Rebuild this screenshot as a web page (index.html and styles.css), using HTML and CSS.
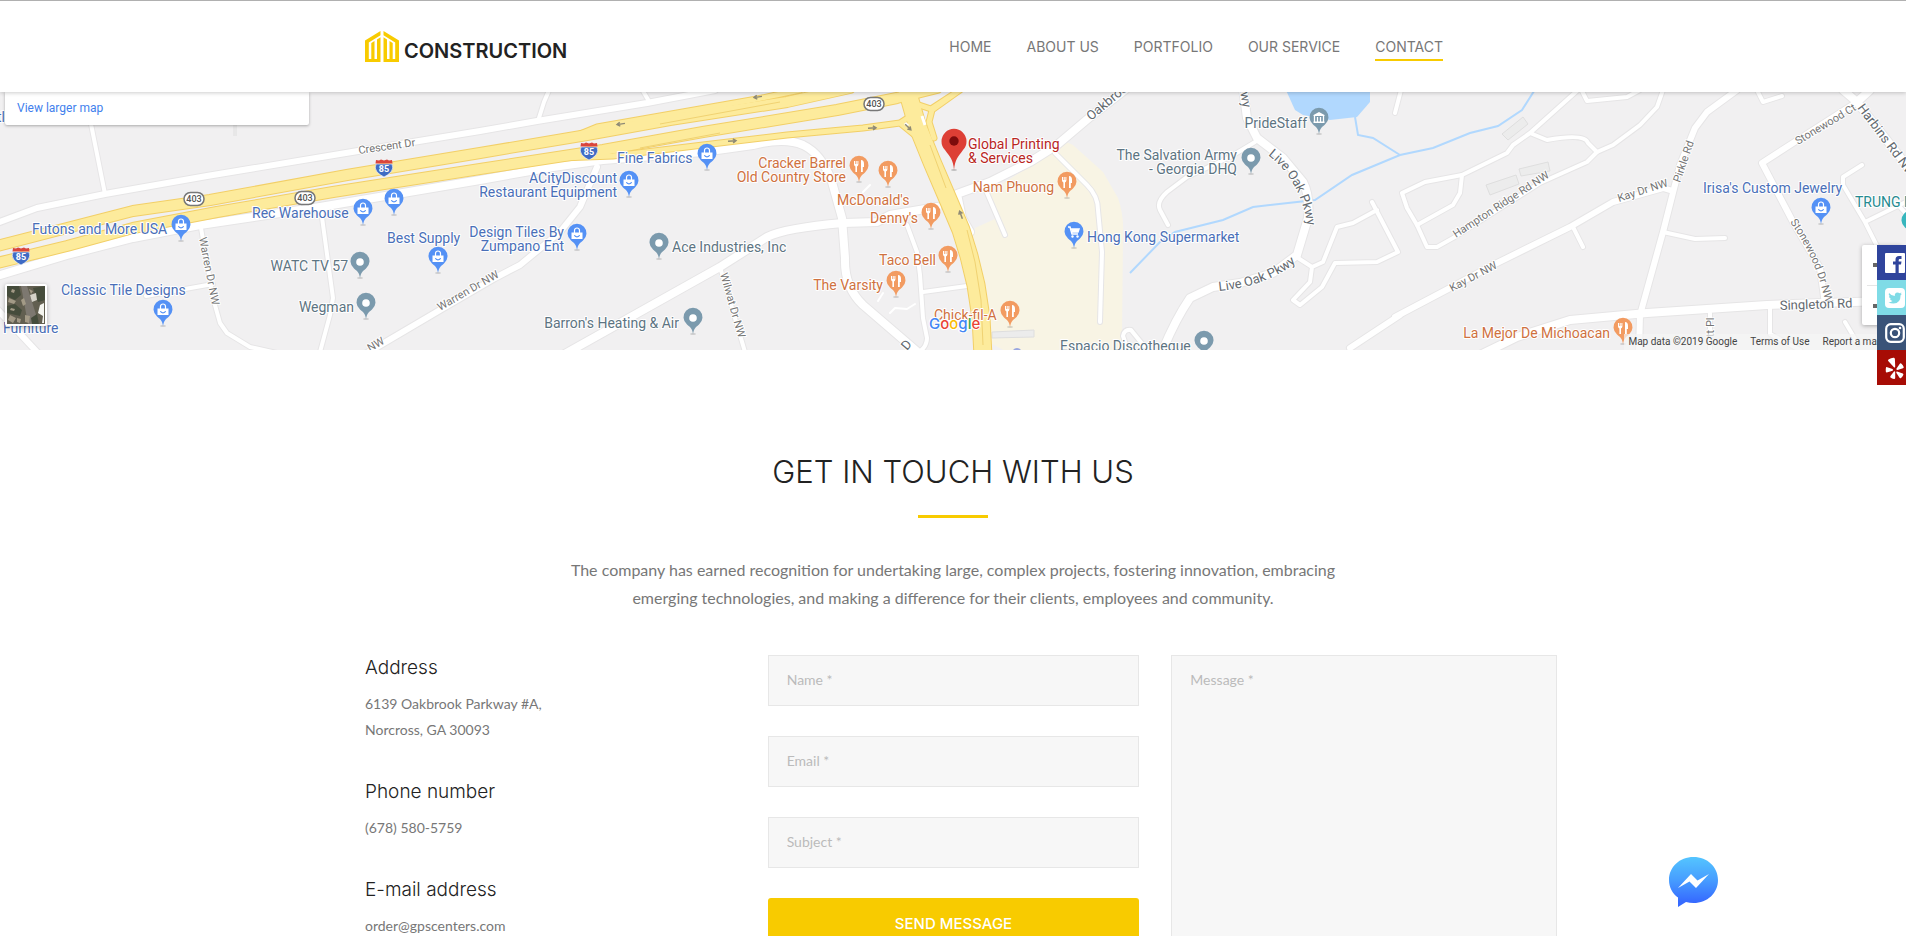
FILE: index.html
```html
<!DOCTYPE html>
<html lang="en">
	<head>
		<meta charset="UTF-8">
		<meta name="viewport" content="width=device-width, initial-scale=1">
		<title>Construction - Contact</title>
		<link rel="stylesheet" href="styles.css">
	</head>
	<body>
		<header class="header">
			<div class="container header-inner">
				<a class="logo" href="#">
					<svg width="34" height="31" viewBox="0 0 34 31" aria-hidden="true">
						<g id="logo-half" fill="#f8cb00">
							<path d="M0 9.500 15.500 0V4.300L3.800 11.500V28H6.300V12L9.500 10V28H12V8.500L15.500 6.300V31H0Z"/>
						</g>
						<use href="#logo-half" transform="translate(34 0) scale(-1 1)"/>
					</svg>
					<span>CONSTRUCTION</span>
				</a>
				<nav class="nav">
					<a href="#">HOME</a>
					<a href="#">ABOUT US</a>
					<a href="#">PORTFOLIO</a>
					<a href="#">OUR SERVICE</a>
					<a href="#" class="active">CONTACT</a>
				</nav>
			</div>
		</header>

		<section class="map">
			<svg class="map-canvas" viewBox="0 92 1906 258" preserveAspectRatio="xMidYMid slice" role="img" aria-label="Map">
				<defs>
					<g id="pin">
						<ellipse cx="0" cy="16" rx="3" ry="1" fill="#000" opacity=".15"/>
						<path d="M0 16C-1 10-3 9-6 6.500A9.500 9.500 0 1 1 6 6.500C3 9 1 10 0 16Z"/>
					</g>
					<g id="shop">
						<use href="#pin" fill="#5491f5"/>
						<path d="M-5.500-1.500H5.500V5H-5.500Z" fill="#fff"/>
						<path d="M-2.500-1V-3.500A2.500 2.500 0 0 1 2.500-3.500V-1" fill="none" stroke="#fff" stroke-width="1.200"/>
						<path d="M-2.500 1C-2 3.500 2 3.500 2.500 1" fill="none" stroke="#5491f5" stroke-width="1.200"/>
					</g>
					<g id="food">
						<use href="#pin" fill="#f29b61"/>
						<path d="M-5-5H-4V-2H-3.300V-5H-2.300V-2H-1.600V-5H-.6V-1.500Q-.8 0-2 .5V6H-3.600V.5Q-4.800 0-5-1.500ZM2-6Q5-6 5-2V1H3.800V6H2Z" fill="#fff"/>
					</g>
					<g id="dot">
						<use href="#pin" fill="#7b9aad"/>
						<circle r="3.800" fill="#fff"/>
					</g>
					<g id="interstate">
						<path d="M-8-4Q-10 0-7 4Q-4 7 0 9Q4 7 7 4Q10 0 8-4Z" fill="#3f6bc4" stroke="#fff" stroke-width=".6"/>
						<path d="M-8-8L-5-7.500-3-8.500 0-7.500 3-8.500 5-7.500 8-8 8.500-4.500H-8.500Z" fill="#d9453c"/>
						<text class="shield-text" y="4">85</text>
					</g>
					<g id="route">
						<rect x="-10" y="-6.500" width="20" height="13" rx="6.500" fill="#fff" stroke="#777" stroke-width="1.500"/>
						<text class="route-text" y="3">403</text>
					</g>
					<g id="arrow">
						<path d="M-4 0H4M1-2 4 0 1 2" fill="none" stroke="#8f8a76" stroke-width="1.500"/>
					</g>

					<!-- streets, grouped by width -->
					<g id="lanes">
						<path d="M91 124 105 194M550 88 544 102 538 121M643 91 650 103"/>
						<path d="M201 228 213 298 220 323 227 333 250 347 277 353M146 296 213 284M321 210 333 298 330 315 320 352"/>
						<path d="M720 267 745 352M907 225 917 252 920 275 923 318 927 338Q927 348 916 354M923 292 967 286"/>
						<path d="M1055 153 1087 185Q1098 196 1098 210L1102 252 1100 322M987 193 1005 235M1255 142 1230 157 1187 177 1167 192Q1156 202 1160 210L1168 225"/>
						<path d="M1129 353 1123 336Q1124 329 1131 330L1144 346M1395 113 1401 90M1298 258 1312 267 1310 282 1293 300 1300 305 1322 287 1335 263 1377 262 1398 252 1372 202M1312 267 1323 262 1337 227 1353 223 1377 210"/>
						<path d="M1462 175 1425 182 1402 193 1407 208 1417 225 1427 247H1437L1453 238 1540 183 1587 162 1597 152 1613 145 1640 125 1657 107 1663 90"/>
						<path d="M1417 225 1453 205 1460 193 1462 175 1507 153 1513 145 1530 133 1578 90M1530 133 1547 140Q1585 133 1588 143L1597 152M1582 91 1587 101 1627 97 1640 90"/>
						<path d="M1663 232 1695 239 1725 238M1573 227 1583 247M1862 165 1843 177V185L1865 222 1884 260M1865 222 1910 200M1757 90 1763 102 1782 96M1710 313V352M1770 308V334L1800 350M1845 322 1858 344M1898 205 1910 218"/>
					</g>
					<g id="streets">
						<path d="M-3 223 37 208 105 194 207 176 358 151 480 131 537 121 647 103 715 90"/>
						<path d="M367 353 440 310 495 278 520 265 560 232 580 207 597 167M-3 309 37 352"/>
						<path d="M1737 90 1707 112 1695 128 1680 165 1663 232 1640 315 1639 352M1395 317 1450 288 1493 265 1570 227 1613 202 1663 188 1673 191M1350 348 1400 315"/>
						<path d="M1857 102 1793 143 1762 163 1793 222 1820 268 1825 304"/>
					</g>
					<g id="avenues">
						<path d="M-3 276 67 255 133 238 200 225 320 207 480 180 553 167 603 160 703 152 753 145Q785 137 803 145 822 154 832 182L842 218 845 258Q844 287 863 305L920 354"/>
						<path d="M563 355 670 295 720 267 767 237Q785 228 843 223L877 222 890 215 937 207"/>
						<path d="M1135 82 1090 117 1057 145 1030 162 990 182 957 194 962 218 970 232"/>
						<path d="M1243 88 1247 118 1257 138 1283 158 1303 182Q1310 195 1308 218L1297 255 1273 273 1240 283 1213 287 1190 298Q1175 320 1162 352"/>
						<path d="M1480 355 1517 337 1570 320 1647 313 1767 305 1910 300M1843 90 1857 102 1893 148 1910 170M1857 102 1870 90"/>
					</g>
					<g id="ramps">
						<path d="M580 134 597 127 757 99 800 90M560 158 613 156 703 145 787 135 863 128 900 123 917 112M900 123 916 136M960 90 932 110 929 122 934 138M916 104 931 109 960 90"/>
					</g>
					<g id="highways">
						<path d="M-3 246 67 228 133 211 210 200 347 175 480 153 587 135 670 120 787 102 850 88"/>
						<path d="M-3 263 67 246 133 228 217 212 333 192 480 169 603 150 703 132 837 110 897 98 937 88"/>
					</g>
					<path id="boulevard" d="M906 86 917 125 932 162 950 204 961 230 969 256 976 285 981 318 983 356"/>

					<path id="live-oak-a" d="M1268 155Q1300 180 1307 224"/>
					<path id="live-oak-b" d="M1219 291Q1270 286 1300 259"/>
					<path id="stonewood-dr" d="M1790 222Q1818 262 1826 306"/>
				</defs>

				<rect y="80" width="1906" height="280" fill="#f1f0f1"/>
				<!-- commercial area, water and buildings -->
				<path d="M1062 140 1073 145 1103 172 1118 198Q1124 215 1123 235L1122 338 1117 352H1007L985 340 979 300 967 252 975 228 997 218 987 194 1030 166Z" fill="#f8f4e4"/>
				<path d="M1285 88 1295 110 1303 115 1330 120 1357 117 1370 102V88Z" fill="#b1d8fe"/>
				<path d="M1130 273 1160 242 1175 232 1223 220 1253 207 1315 200 1352 175 1400 155 1433 148 1470 133 1498 126 1522 110 1536 88M1400 155 1373 138 1358 135 1355 117" fill="none" stroke="#b1d8fe" stroke-width="2"/>
				<path d="M1502 134 1523 117 1528 124 1508 140ZM1486 185 1516 175 1519 184 1490 195ZM1519 169 1548 162 1550 171 1521 176ZM992 332 1034 330V337L992 338Z" class="building"/>
				<path d="M234 125V136M236 125V136" class="building"/>

				<g class="casing">
					<use href="#lanes" stroke-width="6"/>
					<use href="#streets" stroke-width="8"/>
					<use href="#avenues" stroke-width="10"/>
				</g>
				<g class="road">
					<use href="#lanes" stroke-width="4"/>
					<use href="#streets" stroke-width="6"/>
					<use href="#avenues" stroke-width="8"/>
					<path d="M890 313 895 308 907 309 915 304M878 301 883 293M863 192 870 185" stroke-width="2"/>
				</g>
				<g class="highway-casing">
					<use href="#ramps" stroke-width="7"/>
					<use href="#highways" stroke-width="12"/>
					<use href="#boulevard" stroke-width="19"/>
				</g>
				<g class="highway">
					<use href="#ramps" stroke-width="5"/>
					<use href="#highways" stroke-width="10"/>
					<use href="#boulevard" stroke-width="17"/>
				</g>
				<path d="M930 145 946 188M967 230 975 262 981 300 983 345M660 124 780 102M640 148 720 133" fill="none" stroke="#f0d272" stroke-width="1"/>
				<path d="M922 116 925 125M905 123 908 126" stroke="#fff" stroke-width="3" fill="none"/>
				<use href="#arrow" transform="translate(621 124) rotate(171)"/>
				<use href="#arrow" transform="translate(758 97) rotate(171)"/>
				<use href="#arrow" transform="translate(732 141) rotate(-5)"/>
				<use href="#arrow" transform="translate(872 128) rotate(-3)"/>
				<use href="#arrow" transform="translate(908 127) rotate(45)"/>
				<use href="#arrow" transform="translate(961 215) rotate(-110)"/>

				<use href="#interstate" x="384" y="168"/>
				<use href="#interstate" x="21" y="256"/>
				<use href="#interstate" x="589" y="151"/>
				<use href="#route" x="194" y="199"/>
				<use href="#route" x="305" y="198"/>
				<use href="#route" x="874" y="104"/>

				<g class="street-name">
					<text transform="translate(359 154) rotate(-8)">Crescent Dr</text>
					<text transform="translate(199 238) rotate(79)">Warren Dr NW</text>
					<text transform="translate(440 311) rotate(-30)">Warren Dr NW</text>
					<text transform="translate(370 352) rotate(-30)">NW</text>
					<text transform="translate(720 274) rotate(74)">Wilwat Dr NW</text>
					<text transform="translate(1456 238) rotate(-33)">Hampton Ridge Rd NW</text>
					<text transform="translate(1452 292) rotate(-28)">Kay Dr NW</text>
					<text transform="translate(1619 202) rotate(-18)">Kay Dr NW</text>
					<text transform="translate(1680 183) rotate(-71)">Pirkle Rd</text>
					<text transform="translate(1798 145) rotate(-31)">Stonewood Ct</text>
					<text transform="translate(1714 337) rotate(-90)">tt Pl</text>
					<text><textPath href="#stonewood-dr">Stonewood Dr NW</textPath></text>
				</g>
				<g class="street-name main">
					<text transform="translate(1091 121) rotate(-40)">Oakbrook</text>
					<text transform="translate(1239 86) rotate(80)">kwy</text>
					<text><textPath href="#live-oak-a">Live Oak Pkwy</textPath></text>
					<text><textPath href="#live-oak-b">Live Oak Pkwy</textPath></text>
					<text transform="translate(1857 108) rotate(53)">Harbins Rd NW</text>
					<text transform="translate(1780 310) rotate(-2)">Singleton Rd</text>
					<text transform="translate(907 351) rotate(-50)">D</text>
				</g>

				<g class="place shop">
					<text x="-3" y="122">tl</text>
					<text x="32" y="234">Futons and More USA</text>
					<text x="252" y="218">Rec Warehouse</text>
					<text x="387" y="243">Best Supply</text>
					<text x="61" y="295">Classic Tile Designs</text>
					<text x="3" y="333">Furniture</text>
					<text x="617" y="163">Fine Fabrics</text>
					<text x="617" y="183" class="end">ACityDiscount</text>
					<text x="617" y="197" class="end">Restaurant Equipment</text>
					<text x="564" y="237" class="end">Design Tiles By</text>
					<text x="564" y="251" class="end">Zumpano Ent</text>
					<text x="1087" y="242">Hong Kong Supermarket</text>
					<text x="1703" y="193">Irisa's Custom Jewelry</text>
				</g>
				<g class="place other">
					<text x="348" y="271" class="end">WATC TV 57</text>
					<text x="354" y="312" class="end">Wegman</text>
					<text x="672" y="252">Ace Industries, Inc</text>
					<text x="679" y="328" class="end">Barron's Heating &amp; Air</text>
					<text x="1237" y="160" class="end">The Salvation Army</text>
					<text x="1237" y="174" class="end">- Georgia DHQ</text>
					<text x="1307" y="128" class="end">PrideStaff</text>
					<text x="1060" y="351">Espacio Discotheque</text>
				</g>
				<g class="place food">
					<text x="846" y="168" class="end">Cracker Barrel</text>
					<text x="846" y="182" class="end">Old Country Store</text>
					<text x="837" y="205">McDonald's</text>
					<text x="918" y="223" class="end">Denny's</text>
					<text x="936" y="265" class="end">Taco Bell</text>
					<text x="883" y="290" class="end">The Varsity</text>
					<text x="934" y="320">Chick-fil-A</text>
					<text x="1054" y="192" class="end">Nam Phuong</text>
					<text x="1610" y="338" class="end">La Mejor De Michoacan</text>
				</g>
				<g class="place target">
					<text x="968" y="149">Global Printing</text>
					<text x="968" y="163">&amp; Services</text>
				</g>
				<text class="place fun" x="1855" y="207">TRUNG NGUYEN</text>

				<use href="#shop" x="181" y="225"/>
				<use href="#shop" x="363" y="209"/>
				<use href="#shop" x="394" y="199"/>
				<use href="#shop" x="438" y="257"/>
				<use href="#shop" x="163" y="310"/>
				<use href="#shop" x="707" y="154"/>
				<use href="#shop" x="629" y="181"/>
				<use href="#shop" x="577" y="234"/>
				<use href="#shop" x="1821" y="208"/>
				<use href="#dot" x="360" y="262"/>
				<use href="#dot" x="366" y="303"/>
				<use href="#dot" x="659" y="243"/>
				<use href="#dot" x="693" y="318"/>
				<use href="#dot" x="1251" y="158"/>
				<use href="#dot" x="1204" y="341"/>
				<use href="#food" x="859" y="166"/>
				<use href="#food" x="888" y="171"/>
				<use href="#food" x="931" y="213"/>
				<use href="#food" x="948" y="256"/>
				<use href="#food" x="896" y="281"/>
				<use href="#food" x="1067" y="182"/>
				<use href="#food" x="1010" y="311"/>
				<use href="#food" x="1623" y="328"/>
				<use href="#pin" x="1911" y="221" fill="#37b6bd"/>
				<g transform="translate(1074 232)">
					<use href="#pin" fill="#5491f5"/>
					<path d="M-6-5H-4L-2 2H4M-3-3H5L4 0H-2" fill="none" stroke="#fff" stroke-width="1.500"/>
					<path d="M-3-3H5L4 0H-2Z" fill="#fff"/>
					<circle cx="-1.500" cy="4.500" r="1.200" fill="#fff"/>
					<circle cx="3.500" cy="4.500" r="1.200" fill="#fff"/>
				</g>
				<g transform="translate(1319 118)">
					<use href="#pin" fill="#7b9aad"/>
					<path d="M0-6 5.500-3V-2H-5.500V-3ZM-5.500 3.500H5.500V5H-5.500Z" fill="#fff"/>
					<path d="M-4.500-2V4M-1.500-1V4M1.500-1V4M4.500-2V4" stroke="#fff" stroke-width="1.300"/>
				</g>
				<g transform="translate(954 141)">
					<ellipse cy="29" rx="3" ry="1" fill="#000" opacity=".2"/>
					<path d="M0 29C-1 18-4 16-9 9A12.500 12.500 0 1 1 9 9C4 16 1 18 0 29Z" fill="#dd3f35"/>
					<circle r="4.700" fill="#7d0b0c"/>
				</g>
				<path d="M1013 350A5 5 0 0 1 1021 350Z" fill="#9aa7e0"/>
				<text class="google" x="929" y="329"><tspan fill="#4285f4">G</tspan><tspan fill="#ea4335">o</tspan><tspan fill="#fbbc05">o</tspan><tspan fill="#4285f4">g</tspan><tspan fill="#34a853">l</tspan><tspan fill="#ea4335">e</tspan></text>
			</svg>

			<div class="map-card"><a href="#">View larger map</a></div>
			<button class="map-type" type="button" aria-label="Satellite view">
				<svg viewBox="0 0 38 38" aria-hidden="true">
					<rect width="38" height="38" fill="#625f50"/>
					<path d="M14 0 21 38H32L20 0Z" fill="#7d7870"/>
					<path d="M0 0H12L14 9 8 14 0 10ZM26 2 38 0V14L31 16ZM0 20 8 18 15 24 13 30 0 27ZM24 32 30 28 32 38H25Z" fill="#454c3b"/>
					<path d="M2 12 9 15 7 18 1 16ZM3 29 9 32 6 37 1 34ZM14 14 17 12 19 18 16 20ZM22 3 26 5 24 8Z" fill="#a39a86"/>
					<path d="M23 9 29 7 30 14 25 16Z" fill="#d5d2c8"/>
					<path d="M33 19 37 17V37H35L36 30 31 27Z" fill="#f4f4ee"/>
					<path d="M18 29 23 30 22 37 18 36ZM10 32 14 33 13 37 10 36ZM5 3 8 4 7 7 4 6ZM4 22 8 23 7 25 3 24Z" fill="#a39a86"/>
				</svg>
			</button>
			<div class="map-zoom">
				<button type="button" aria-label="Zoom in"></button>
				<button type="button" aria-label="Zoom out"></button>
			</div>
			<div class="map-credits">
				<span>Map data ©2019 Google</span>
				<a href="#">Terms of Use</a>
				<a href="#">Report a map error</a>
			</div>
		</section>

		<main class="contact">
			<h1>GET IN TOUCH WITH US</h1>
			<p class="lead">The company has earned recognition for undertaking large, complex projects, fostering innovation, embracing emerging technologies, and making a difference for their clients, employees and community.</p>

			<div class="columns">
				<div class="info">
					<h2>Address</h2>
					<p>6139 Oakbrook Parkway #A,<br>Norcross, GA 30093</p>
					<h2>Phone number</h2>
					<p>(678) 580-5759</p>
					<h2>E-mail address</h2>
					<p>order@gpscenters.com</p>
				</div>
				<form class="form" action="#">
					<div class="fields">
						<input type="text" placeholder="Name *" aria-label="Name">
						<input type="email" placeholder="Email *" aria-label="Email">
						<input type="text" placeholder="Subject *" aria-label="Subject">
						<button type="submit">SEND MESSAGE</button>
					</div>
					<div class="message">
						<textarea placeholder="Message *" aria-label="Message"></textarea>
					</div>
				</form>
			</div>
		</main>

		<!-- social links -->
		<div class="social">
			<a class="facebook" href="#" aria-label="Facebook">
				<svg viewBox="0 0 20 20"><rect width="20" height="20" rx="1" fill="#fff"/><path d="M10.500 20V11.500H8V8.500H10.500V6.500Q10.500 3 14 3H16.500V6H14.800Q13.700 6 13.700 7.200V8.500H16.500L16 11.500H13.700V20Z" fill="#2f449c"/></svg>
			</a>
			<a class="twitter" href="#" aria-label="Twitter">
				<svg viewBox="0 0 20 20"><rect width="20" height="20" rx="4" fill="#fff"/><path d="M4 5Q6.500 8 9.800 8Q9.500 4.500 12.500 4.500Q13.800 4.500 14.500 5.200L16.500 4.500 15.500 6 17 5.800 15.600 7.300Q15.600 15.500 8.500 15.500 5.500 15.500 3.500 14.200 6 14.200 7.500 13 5.500 12.700 5 11L6 10.900Q4 10 4 8L5 8.300Q3 7 4 5Z" fill="#7fdbe6"/></svg>
			</a>
			<a class="instagram" href="#" aria-label="Instagram">
				<svg viewBox="0 0 20 20"><rect x="1.200" y="1.200" width="17.600" height="17.600" rx="4.500" fill="none" stroke="#fff" stroke-width="2.200"/><circle cx="10" cy="10" r="4.200" fill="none" stroke="#fff" stroke-width="2.200"/><circle cx="15" cy="5" r="1.300" fill="#fff"/></svg>
			</a>
			<a class="yelp" href="#" aria-label="Yelp">
				<svg viewBox="0 0 20 20" fill="#fff"><path d="M3.500 1.500Q6.500-.5 9-.2 9.800 0 9.900 1L10.200 8.500Q10 10.300 8.700 9L3.200 3Q2.700 2 3.500 1.500Z"/><path d="M1.500 9 7.500 11Q8.800 12 7.500 12.800L1.800 14.500Q.8 14.500.8 13.500.6 11 1 9.500 1 9 1.500 9Z"/><path d="M9 13.500Q10 13 10.200 14V20Q10 21.200 9 21 7 20.500 5.500 19.500 5 19 5.500 18Z"/><path d="M12 13.500 17.800 15.500Q18.700 16 18.300 17 17.500 19 15.800 20.200 15 20.500 14.500 19.800L11.300 14.800Q11 13.500 12 13.500Z"/><path d="M11.500 10.500 15 5.500Q15.700 5 16.500 5.700 18 7 18.700 9 18.900 10 18 10.300L12.500 12Q11 12 11.500 10.500Z"/></svg>
			</a>
		</div>

		<a class="messenger" href="#" aria-label="Messenger">
			<svg width="49" height="50" viewBox="0 0 49 50">
				<defs>
					<linearGradient id="bubble" x1="0" y1="0" x2="0" y2="1">
						<stop offset="0" stop-color="#54c5ff"/>
						<stop offset=".45" stop-color="#479eff"/>
						<stop offset=".9" stop-color="#366aff"/>
					</linearGradient>
				</defs>
				<path d="M24.500 0C38.500 0 49 10 49 23S38.500 46 24.500 46Q20.500 46 17 45L9 50V40.500C3.500 36.500 0 30.500 0 23 0 10 10.500 0 24.500 0Z" fill="url(#bubble)"/>
				<path d="M9 31 22 17 28.500 23.500 40 17 27 31 20.500 24.500Z" fill="#fff"/>
			</svg>
		</a>
	</body>
</html>
```
FILE: styles.css
```css
*{
	margin: 0;
	padding: 0;
	box-sizing: border-box;
}
body{
	font-family: Lato, "Open Sans", sans-serif;
	font-size: 14px;
	line-height: 26px;
	color: #777;
	background: #fff;
}
a{
	color: inherit;
	text-decoration: none;
}
.container, .columns{
	max-width: 1208px;
	margin: 0 auto;
}

/* header */
.header{
	position: relative;
	z-index: 2;
	border-top: 1px solid #b0b0b0;
	background: #fff;
	box-shadow: 0 1px 4px rgba(0,0,0,0.2);
}
.header-inner{
	display: flex;
	justify-content: space-between;
	align-items: center;
	height: 91px;
	padding: 0 114px 0 16px;
}
.logo{
	display: flex;
	align-items: center;
	gap: 5px;
	color: #222;
	font-family: Inter, "Open Sans", sans-serif;
	font-size: 20px;
	font-weight: 600;
}
.logo span{
	padding-top: 8px;
}
.nav{
	display: flex;
	gap: 35px;
	font-family: Inter, "Open Sans", sans-serif;
	font-size: 14px;
	font-weight: 400;
	line-height: 24px;
}
.nav a{
	border-top: 2px solid transparent;
	border-bottom: 2px solid transparent;
}
.nav .active{
	border-bottom-color: #f8cb00;
}

/* map */
.map{
	position: relative;
	overflow: hidden;
	font-family: Roboto, "Open Sans", sans-serif;
}
.map-canvas{
	display: block;
	width: 100%;
	height: 258px;
}
.casing, .road, .highway, .highway-casing{
	fill: none;
	stroke-linejoin: round;
	stroke-linecap: round;
}
.casing{
	stroke: #e6e5e6;
}
.road{
	stroke: #fff;
}
.highway{
	stroke: #fdeb9c;
}
.highway-casing{
	stroke: #f2cf67;
}
.building{
	fill: #ececec;
	stroke: #dedede;
}
.place, .street-name{
	font-size: 14px;
	paint-order: stroke;
	stroke: #fff;
	stroke-width: 2px;
	stroke-linejoin: round;
}
.street-name{
	font-size: 11px;
	fill: #757575;
}
.street-name.main{
	font-size: 13px;
	fill: #62696f;
}
.shop{
	fill: #4a6fb8;
}
.other{
	fill: #5d7482;
}
.food{
	fill: #cf7140;
}
.target{
	fill: #b9261f;
}
.fun{
	fill: #258a90;
}
.end{
	text-anchor: end;
}
.shield-text, .route-text{
	font-size: 9px;
	font-weight: 700;
	text-anchor: middle;
	fill: #fff;
}
.route-text{
	font-weight: 500;
	fill: #555;
}
.google{
	font-family: Inter, sans-serif;
	font-size: 15px;
	font-weight: 500;
	paint-order: stroke;
	stroke: #fff;
	stroke-width: 2px;
}
.map-card{
	position: absolute;
	top: 0;
	left: 5px;
	width: 304px;
	padding: 3px 12px 4px;
	border-radius: 0 0 2px 2px;
	background: #fff;
	box-shadow: 0 1px 3px rgba(0,0,0,0.3);
	font-size: 12px;
	color: #427fed;
}
.map-type{
	position: absolute;
	left: 5px;
	bottom: 24px;
	width: 42px;
	height: 42px;
	border: 2px solid #fff;
	border-radius: 2px;
	background: #fff;
	box-shadow: 0 1px 4px rgba(0,0,0,0.3);
}
.map-type svg{
	display: block;
}
.map-zoom{
	position: absolute;
	right: 4px;
	bottom: 25px;
	width: 40px;
	padding: 0 5px;
	border-radius: 2px;
	background: #fff;
	box-shadow: 0 1px 4px rgba(0,0,0,0.3);
}
.map-zoom button{
	display: block;
	width: 100%;
	height: 40px;
	border: 0;
	background: linear-gradient(#666,#666) center / 18px 4px no-repeat;
}
.map-zoom button + button{
	border-top: 1px solid #e6e6e6;
}
.map-credits{
	position: absolute;
	right: 0;
	bottom: 0;
	display: flex;
	gap: 13px;
	padding-left: 4px;
	background: rgba(245,245,245,0.7);
	font-size: 10px;
	line-height: 16px;
	color: #444;
}

/* contact */
.contact{
	padding-top: 102px;
}
.contact h1{
	font-family: Inter, "Open Sans", sans-serif;
	font-size: 31px;
	font-weight: 300;
	line-height: 40px;
	text-align: center;
	color: #222;
}
.contact h1::after{
	content: "";
	display: block;
	width: 70px;
	height: 3px;
	margin: 23px auto 0;
	background: #f8cb00;
}
.lead{
	max-width: 800px;
	margin: 38px auto 43px;
	font-size: 16px;
	line-height: 28px;
	text-align: center;
}
.columns{
	display: grid;
	grid-template-columns: 1fr 2fr;
}
.info{
	padding: 1px 0 0 16px;
}
.info h2{
	font-family: Inter, "Open Sans", sans-serif;
	font-size: 19px;
	font-weight: 300;
	line-height: 24px;
	color: #222;
	margin-bottom: 11px;
}
.info p{
	margin-bottom: 37px;
}
.form{
	display: grid;
	grid-template-columns: 1fr 1fr;
}
.fields{
	display: flex;
	flex-direction: column;
	gap: 30px;
	padding: 0 15px 0 16px;
}
.message{
	padding-left: 17px;
}
.form input, .form textarea{
	width: 100%;
	height: 51px;
	padding: 0 18px 2px;
	border: 1px solid #e7e7e7;
	background: #f7f7f7;
	font: inherit;
	color: #777;
}
.form textarea{
	display: block;
	height: 100%;
	padding-top: 11px;
	resize: none;
}
.form ::placeholder{
	color: #bbb;
}
.form button{
	height: 50px;
	border: 0;
	border-radius: 3px;
	background: #f8cb00;
	font-family: Inter, "Open Sans", sans-serif;
	font-size: 15px;
	font-weight: 500;
	color: #fff;
}

/* floating widgets */
.social{
	position: fixed;
	top: 245px;
	right: 0;
	z-index: 3;
	width: 29px;
}
.social a{
	display: block;
	height: 35px;
	padding: 8px 1px 7px 8px;
}
.social svg{
	display: block;
	width: 20px;
	height: 20px;
	overflow: visible;
}
.facebook{
	background: #2f449c;
}
.twitter{
	background: #7fdbe6;
}
.instagram{
	background: #3a5378;
}
.yelp{
	background: #a70c05;
}
.messenger{
	position: fixed;
	right: 188px;
	bottom: 29px;
	z-index: 3;
}
.messenger svg{
	display: block;
}
```
